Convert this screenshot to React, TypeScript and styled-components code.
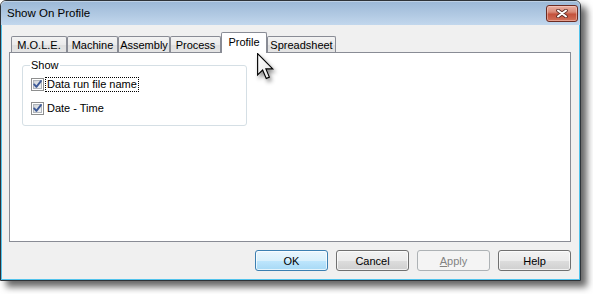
import { createGlobalStyle, styled } from "styled-components";

const GlobalStyle = createGlobalStyle`
  html, body {
    margin: 0;
    padding: 0;
    background: #ffffff;
  }
  body {
    font-family: "Liberation Sans", Arial, sans-serif;
    font-size: 11px;
    color: #000;
  }
`;

const tabs = [
    { label: "M.O.L.E.", width: 56 },
    { label: "Machine", width: 51 },
    { label: "Assembly", width: 52 },
    { label: "Process", width: 51 },
    { label: "Profile", width: 46, active: true },
    { label: "Spreadsheet", width: 69 },
];

function CheckBox() {
    return (
        <Box width="13" height="13" viewBox="0 0 13 13">
            <defs>
                <linearGradient id="cbFill" x1="0" y1="0" x2="1" y2="1">
                    <stop offset="0" stopColor="#cdd1d6" />
                    <stop offset="1" stopColor="#f7f7f8" />
                </linearGradient>
            </defs>
            <rect x="0.5" y="0.5" width="12" height="12" fill="#fff" stroke="#8e8f8f" />
            <rect x="2.5" y="2.5" width="8" height="8" fill="url(#cbFill)" stroke="#b0b5bb" />
            <path d="M3.2 6.4 L5.4 8.9 L9.9 3.1" fill="none" stroke="#3d5a98" strokeWidth="1.9" strokeLinecap="round" strokeLinejoin="round" />
        </Box>
    );
}

function App() {
    return (
        <Stage>
            <GlobalStyle />
            <Window>
                <TitleBar>
                    <Title>Show On Profile</Title>
                    <CloseButton>
                        <svg width="12" height="9" viewBox="0 0 12 9">
                            <path d="M2 1.5 L10 7.5 M10 1.5 L2 7.5" stroke="#5b2a24" strokeWidth="3.6" strokeLinecap="round" />
                            <path d="M2 1.5 L10 7.5 M10 1.5 L2 7.5" stroke="#ffffff" strokeWidth="2" strokeLinecap="round" />
                        </svg>
                    </CloseButton>
                </TitleBar>
                <Body>
                    <TabStrip>
                        {tabs.map(t => (
                            <Tab key={t.label} $w={t.width} $active={t.active}>{t.label}</Tab>
                        ))}
                    </TabStrip>
                    <Panel>
                        <Group>
                            <Legend>Show</Legend>
                            <Rows>
                                <Row>
                                    <CheckBox />
                                    <Label $focused>Data run file name</Label>
                                </Row>
                                <Row>
                                    <CheckBox />
                                    <Label>Date - Time</Label>
                                </Row>
                            </Rows>
                        </Group>
                    </Panel>
                    <ButtonRow>
                        <Button $kind="default">OK</Button>
                        <Button>Cancel</Button>
                        <Button $kind="disabled"><u>A</u>pply</Button>
                        <Button>Help</Button>
                    </ButtonRow>
                </Body>
            </Window>
            <Cursor width="20" height="30" viewBox="0 0 16 24">
                <defs>
                    <linearGradient id="curFill" x1="0" y1="0" x2="1" y2="1">
                        <stop offset="0" stopColor="#ffffff" />
                        <stop offset="1" stopColor="#e4e4e4" />
                    </linearGradient>
                </defs>
                <path d="M0.5 0.5 V17.5 L4.5 13.6 L7.4 20.4 L9.9 19.3 L7.1 12.7 H12.6 Z" fill="url(#curFill)" stroke="#000" strokeWidth="0.9" strokeLinejoin="miter" />
            </Cursor>
        </Stage>
    );
}

const Stage = styled.div`
    position: relative;
    width: 593px;
    height: 294px;
`;

const Window = styled.div`
    width: 581px;
    height: 281px;
    box-sizing: border-box;
    border: 1px solid #2e3338;
    border-radius: 6px 6px 0 0;
    background: #f0f0f0;
    display: flex;
    flex-direction: column;
    box-shadow: 6px 6px 7px rgba(0, 0, 0, 0.6);
`;

const TitleBar = styled.div`
    height: 24px;
    display: flex;
    justify-content: space-between;
    align-items: flex-start;
    padding: 0 2px 0 6px;
    border-radius: 5px 5px 0 0;
    background: linear-gradient(#9bb8d7, #b2cae3 60%, #c2d7ed);
    box-shadow: inset 0 1px 0 rgba(255, 255, 255, 0.35);
`;

const Title = styled.span`
    line-height: 25px;
    font-size: 11.5px;
    color: #000;
`;

const CloseButton = styled.div`
    margin-top: 4px;
    width: 32px;
    height: 17px;
    box-sizing: border-box;
    border: 1px solid #6c2b22;
    border-radius: 3px;
    display: flex;
    align-items: center;
    justify-content: center;
    background: linear-gradient(#eab0a3, #d98a78 40%, #c4513c 55%, #d2715a);
    box-shadow: inset 0 0 0 1px rgba(255, 220, 210, 0.45);
`;

const Body = styled.div`
    flex: 1;
    display: flex;
    flex-direction: column;
    border: 1px solid #52c3ec;
    border-top: none;
    padding: 7px 8px 8px 7px;
`;

const TabStrip = styled.div`
    height: 20px;
    display: flex;
    align-items: flex-end;
    padding-left: 2px;
    position: relative;
    z-index: 1;
`;

const Tab = styled.div<{ $w: number; $active?: boolean }>`
    width: ${p => p.$w}px;
    height: ${p => (p.$active ? 21 : 16)}px;
    margin-bottom: ${p => (p.$active ? -1 : 0)}px;
    box-sizing: border-box;
    border: 1px solid #898c95;
    border-bottom: none;
    border-radius: 2px 2px 0 0;
    background: ${p => (p.$active ? "#ffffff" : "linear-gradient(#f3f3f3, #ebebeb 50%, #dedede 51%, #e5e5e5)")};
    display: flex;
    align-items: center;
    justify-content: center;
    padding-bottom: ${p => (p.$active ? 2 : 0)}px;
    white-space: nowrap;
`;

const Panel = styled.div`
    flex: 1;
    border: 1px solid #898c95;
    background: #ffffff;
    padding: 6px 0 0 12px;
`;

const Group = styled.fieldset`
    width: 225px;
    box-sizing: border-box;
    margin: 0;
    padding: 5px 0 9px 7px;
    border: 1px solid #d5dfe5;
    border-radius: 3px;
`;

const Legend = styled.legend`
    padding: 0 1px;
    line-height: 13px;
`;

const Rows = styled.div`
    display: flex;
    flex-direction: column;
    gap: 9px;
`;

const Row = styled.div`
    height: 15px;
    display: flex;
    align-items: center;
    gap: 2px;
    padding-left: 1px;
`;

const Box = styled.svg`
    display: block;
    flex: none;
`;

const Label = styled.span<{ $focused?: boolean }>`
    line-height: 13px;
    padding: 0 1px;
    outline: ${p => (p.$focused ? "1px dotted #000" : "none")};
`;

const ButtonRow = styled.div`
    display: flex;
    justify-content: flex-end;
    gap: 8px;
    margin-top: 8px;
`;

const Button = styled.div<{ $kind?: "default" | "disabled" }>`
    width: 73px;
    height: 21px;
    box-sizing: border-box;
    border: 1px solid ${p => (p.$kind === "default" ? "#3c7fb1" : p.$kind === "disabled" ? "#adb2b5" : "#707070")};
    border-radius: 3px;
    display: flex;
    align-items: center;
    justify-content: center;
    color: ${p => (p.$kind === "disabled" ? "#838383" : "#000")};
    background: ${p =>
        p.$kind === "default"
            ? "linear-gradient(#eaf6fd, #d9f0fc 50%, #bee6fd 51%, #a7d9f5)"
            : p.$kind === "disabled"
            ? "#f4f4f4"
            : "linear-gradient(#f2f2f2, #ebebeb 50%, #dddddd 51%, #cfcfcf)"};
    box-shadow: inset 0 0 0 1px rgba(255, 255, 255, ${p => (p.$kind === "disabled" ? 0 : 0.7)});
`;

const Cursor = styled.svg`
    position: absolute;
    left: 257px;
    top: 53px;
    filter: drop-shadow(2px 3px 2px rgba(0, 0, 0, 0.45));
`;

export default App;
